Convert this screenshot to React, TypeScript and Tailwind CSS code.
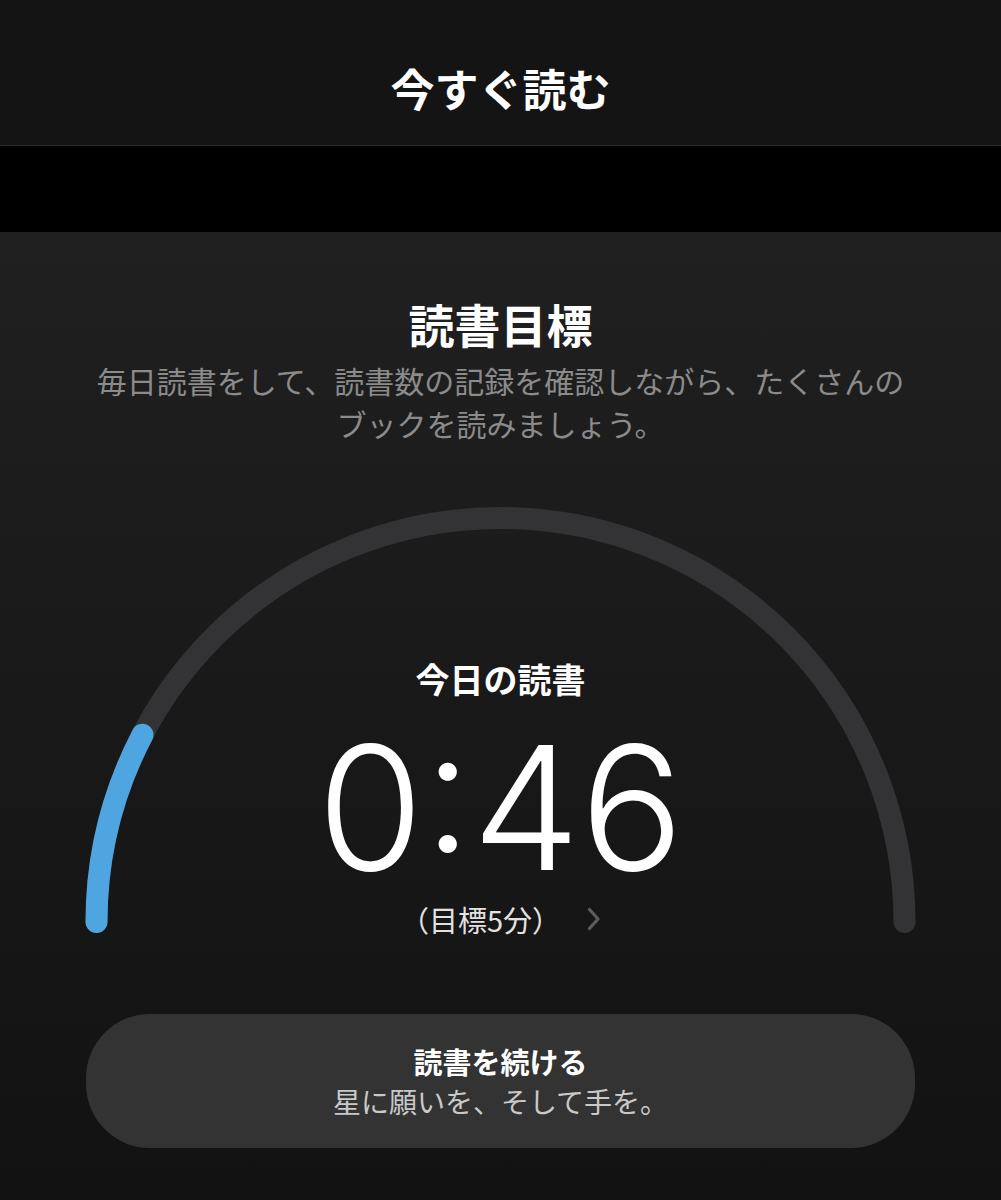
const jp = { fontFamily: '"Noto Sans CJK JP", "Noto Sans", sans-serif' };

function Gauge({ minutes, goal }: { minutes: number; goal: number }) {
  const done = Math.min(minutes / goal, 1) * 300;
  return (
    <div className="relative h-[450px] w-full">
      <svg
        className="absolute inset-0 h-full w-full"
        viewBox="0 0 1001 450"
        fill="none"
      >
        <path
          d="M 96.5 427 A 404 404 0 0 1 904.5 427"
          stroke="#333335"
          strokeWidth="22"
          strokeLinecap="round"
        />
        <path
          d="M 96.5 427 A 404 404 0 0 1 904.5 427"
          pathLength={300}
          stroke="#4ea5df"
          strokeWidth="22"
          strokeLinecap="round"
          strokeDasharray={`${done} 400`}
        />
      </svg>
      <div className="relative flex flex-col items-center pt-[162px]">
        <div className="text-[34px] font-bold leading-[44px] text-white">今日の読書</div>
        <div
          className="mt-[36px] h-[140px] text-[172px] font-light leading-[140px] text-white"
          style={{ fontFamily: 'Inter, "Liberation Sans", sans-serif' }}
        >
          0:46
        </div>
        <div className="mt-[22px] flex h-[40px] items-center gap-[26px]">
          <span className="text-[29px] leading-[40px] text-[#e2e2e2]">（目標5分）</span>
          <svg width="14" height="24" viewBox="0 0 14 24" fill="none">
            <path d="M2.5 2.5 L11 12 L2.5 21.5" stroke="#5c5c5c" strokeWidth="3.2" strokeLinecap="round" strokeLinejoin="round" />
          </svg>
        </div>
      </div>
    </div>
  );
}

export default function App() {
  return (
    <div className="flex min-h-[1200px] w-full flex-col bg-[#121212]" style={jp}>
      <header className="flex h-[146px] items-center justify-center border-b border-[#2a2a2a] bg-[#141414] pt-[30px]">
        <h1 className="text-[44px] font-bold leading-none text-white">今すぐ読む</h1>
      </header>
      <div className="h-[86px] bg-black" />
      <main className="flex flex-1 flex-col items-center bg-gradient-to-b from-[#202020] to-[#121212] pt-[61px] pb-[51px]">
        <h2 className="text-[46px] font-bold leading-[60px] text-white">読書目標</h2>
        <p className="mt-[6px] text-center text-[30px] leading-[43px] text-[#8b8b8b]">
          毎日読書をして、読書数の記録を確認しながら、たくさんの
          <br />
          ブックを読みましょう。
        </p>
        <div className="mt-[50px] w-full">
          <Gauge minutes={46} goal={300} />
        </div>
        <button className="mt-[69px] flex h-[134px] w-[829px] flex-col items-center justify-center rounded-[64px] bg-[#333333]">
          <span className="text-[29px] font-bold leading-[40px] text-white">読書を続ける</span>
          <span className="text-[28px] leading-[40px] text-[#c9c9c9]">星に願いを、そして手を。</span>
        </button>
      </main>
    </div>
  );
}
